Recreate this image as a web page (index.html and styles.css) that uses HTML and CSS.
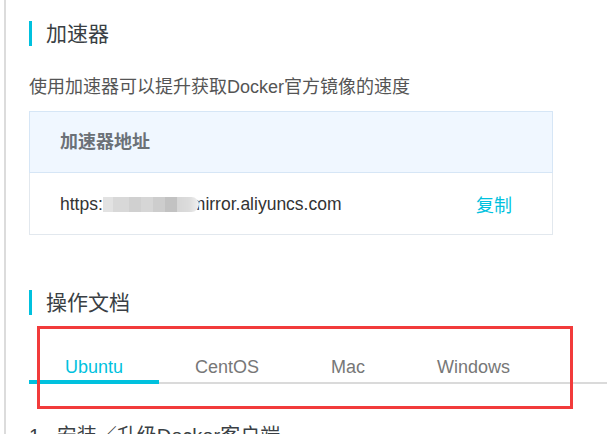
FILE: index.html
```html
<!DOCTYPE html>
<html lang="zh-CN">
<head>
<meta charset="utf-8">
<title>镜像加速器</title>
<link rel="stylesheet" href="styles.css">
</head>
<body>
<div class="page">
  <div class="main">
    <h2 class="section-title">加速器</h2>
    <p class="desc">使用加速器可以提升获取Docker官方镜像的速度</p>
    <div class="mirror-table">
      <div class="mt-head">加速器地址</div>
      <div class="mt-row">
        <span class="url">https:<span class="blur"></span>mirror.aliyuncs.com</span>
        <a class="copy">复制</a>
      </div>
    </div>
    <h2 class="section-title second">操作文档</h2>
    <div class="tabs-wrap">
      <div class="tabs">
        <div class="tab active">Ubuntu</div>
        <div class="tab">CentOS</div>
        <div class="tab">Mac</div>
        <div class="tab">Windows</div>
      </div>
      <div class="highlight"></div>
    </div>
    <h3 class="step">1.&nbsp; 安装／升级Docker客户端</h3>
  </div>
</div>
</body>
</html>
```

FILE: styles.css
```css
html, body {
  margin: 0;
  padding: 0;
  background: #fff;
}
body {
  font-family: "Liberation Sans", "Noto Sans CJK SC", sans-serif;
  color: #373d41;
  overflow: hidden;
}
.page {
  padding-left: 4px;
  height: 434px;
  overflow: hidden;
}
.main {
  border-left: 2px solid #dcdcdc;
  padding-left: 23px;
  height: 100%;
}
.section-title {
  display: flex;
  align-items: center;
  margin: 0;
  padding-top: 21px;
  font-size: 21px;
  font-weight: normal;
  line-height: 25px;
  color: #3a3f44;
}
.section-title::before {
  content: "";
  display: block;
  width: 3px;
  height: 25px;
  background: #00c1de;
  margin-right: 14px;
}
.section-title.second {
  padding-top: 55px;
}
.desc {
  margin: 29px 0 0;
  font-size: 18px;
  line-height: 24px;
  color: #555;
}
.mirror-table {
  width: 524px;
  margin-top: 12px;
}
.mt-head {
  height: 60px;
  line-height: 61px;
  background: #f0f7ff;
  border: 1px solid #d6e6f6;
  padding-left: 30px;
  font-size: 18px;
  font-weight: bold;
  color: #6b7177;
}
.mt-row {
  height: 60px;
  border: 1px solid #e2e8ee;
  border-top: none;
  display: flex;
  align-items: center;
  justify-content: space-between;
  padding: 1px 40px 0 30px;
}
.url {
  font-size: 17.5px;
  color: #333;
}
.blur {
  position: relative;
  z-index: 1;
  display: inline-block;
  width: 96px;
  height: 15px;
  margin-right: -8px;
  vertical-align: -2px;
  border-radius: 0 8px 8px 0;
  background: linear-gradient(90deg,
    #e2e2e2 0, #e2e2e2 10px,
    #d8d8d8 10px, #d8d8d8 26px,
    #d0d0d0 26px, #d0d0d0 38px,
    #d6d6d6 38px, #d6d6d6 50px,
    #cdcdcd 50px, #cdcdcd 62px,
    #c2c2c2 62px, #c2c2c2 74px,
    #d6d6d6 74px, #dcdcdc 86px, #f0f0f0 96px);
  filter: blur(0.6px);
}
.copy {
  font-size: 18px;
  color: #00c1de;
  cursor: pointer;
}
.tabs-wrap {
  position: relative;
  margin-top: 37px;
}
.tabs {
  display: flex;
  border-bottom: 2px solid #dadada;
}
.tab {
  padding: 3px 36px 1px;
  line-height: 24px;
  font-size: 18px;
  color: #777;
  border-bottom: 4px solid transparent;
  margin-bottom: -2px;
}
.tab.active {
  color: #00c1de;
  border-bottom-color: #00c1de;
}
.highlight {
  position: absolute;
  left: 8px;
  top: -26px;
  width: 536px;
  height: 83px;
  box-sizing: border-box;
  border: 3px solid #f23b3b;
  pointer-events: none;
}
.step {
  margin: 38px 0 0;
  font-size: 20px;
  font-weight: normal;
  line-height: 28px;
  color: #3a3f44;
}
```
